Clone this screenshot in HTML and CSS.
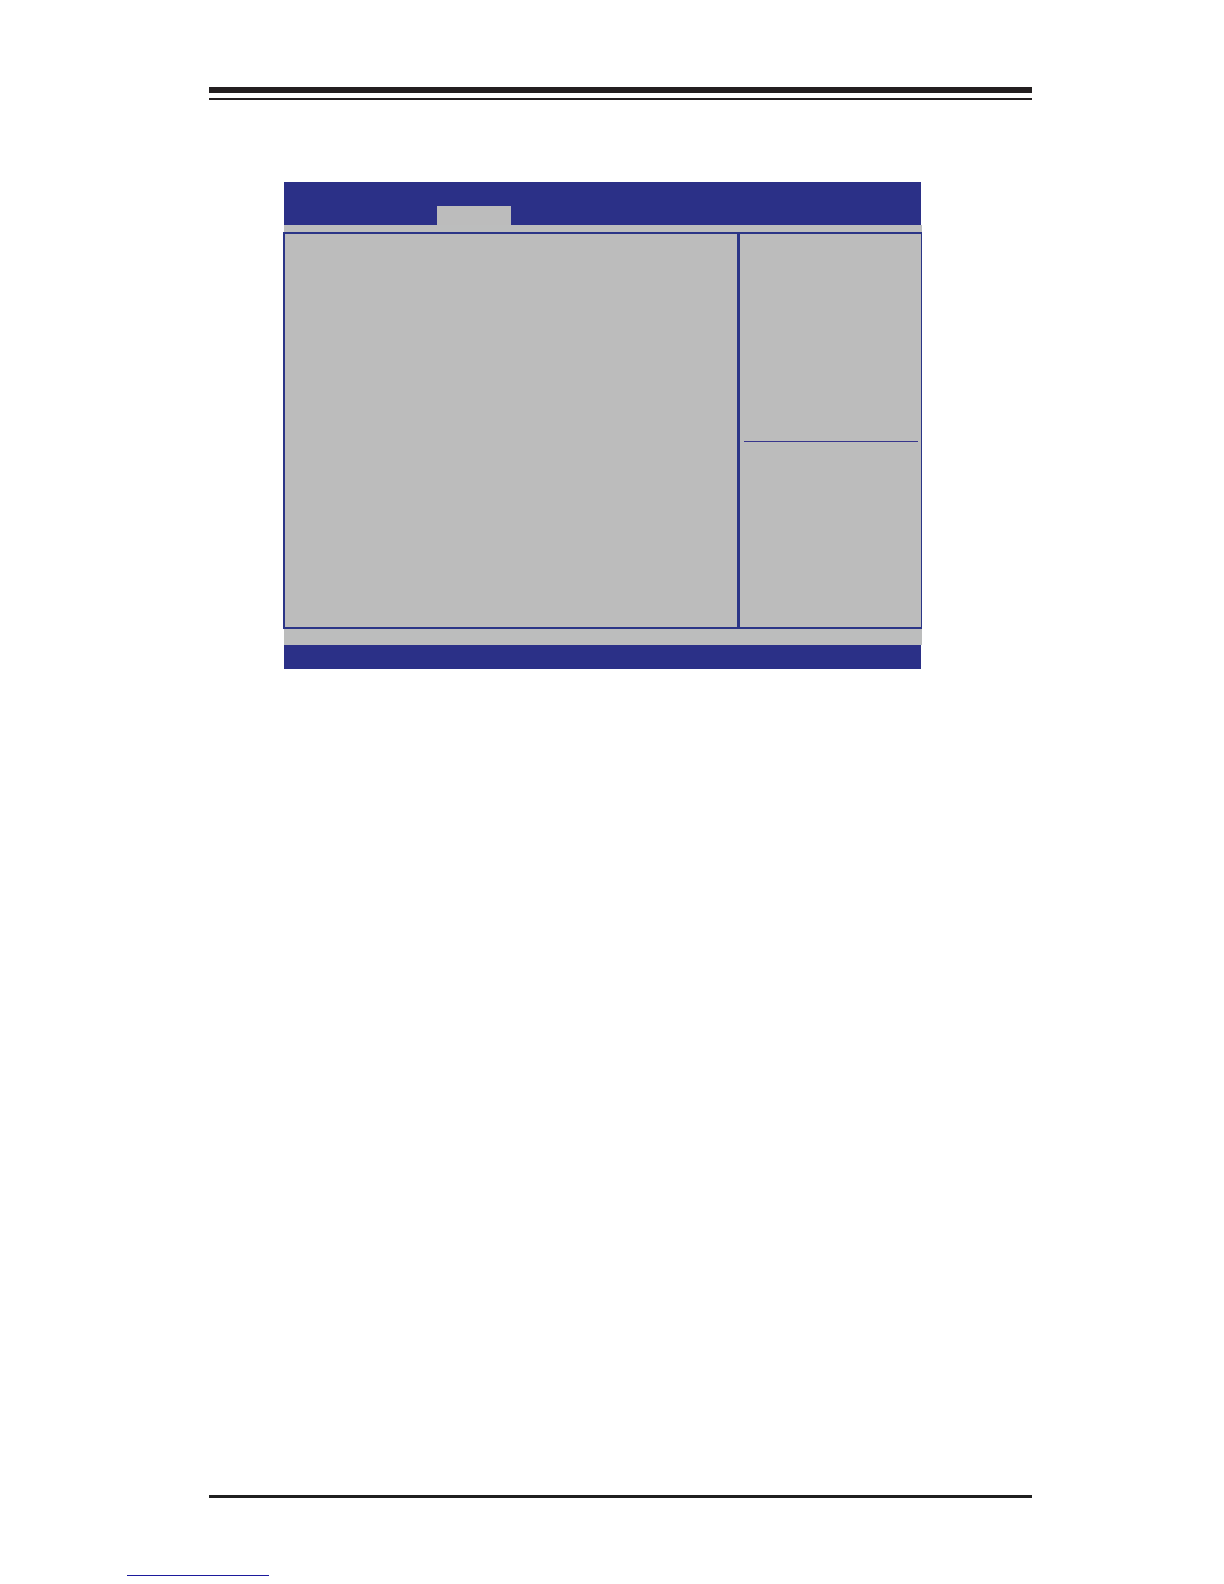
FILE: index.html
```html
<!DOCTYPE html>
<html lang="en">
<head>
    <meta charset="utf-8">
    <title>Setup Utility</title>
    <link rel="stylesheet" href="styles.css">
</head>
<body>
    <div class="page">
        <header class="page-header"></header>

        <main class="content">
            <div class="screen">
                <div class="menu-bar">
                    <div class="tab"></div>
                </div>
                <div class="strip"></div>

                <div class="panel">
                    <section class="options"></section>
                    <aside class="sidebar">
                        <div class="help"></div>
                        <div class="keys"></div>
                    </aside>
                </div>

                <div class="strip strip-bottom"></div>
                <div class="status-bar"></div>
            </div>
        </main>

        <footer class="page-footer"></footer>
    </div>

    <a class="page-link" href="#"></a>
</body>
</html>
```

FILE: styles.css
```css
* {
    box-sizing: border-box;
}

body {
    margin: 0;
    min-height: 100vh;
    display: flex;
    flex-direction: column;
    background-color: #ffffff;
    font-family: "Liberation Sans", Arial, sans-serif;
}

.page {
    flex: 1;
    display: flex;
    flex-direction: column;
    padding: 87px 192px 0 209px;
}

/* thick rule over a thin one */
.page-header {
    height: 13px;
    border-top: 6px solid #231f20;
    border-bottom: 2px solid #231f20;
}

.content {
    flex: 1;
    padding: 82px 110px 0 74px;
}

.menu-bar {
    display: flex;
    align-items: flex-end;
    height: 43px;
    margin: 0 1px;
    padding-left: 153px;
    background-color: #2b3087;
}

.tab {
    width: 74px;
    height: 19px;
    background-color: #bcbcbc;
}

.strip {
    height: 7px;
    margin-left: 1px;
    background-color: #bcbdbd;
}

.strip-bottom {
    height: 16px;
}

.panel {
    display: flex;
    min-height: 397px;
    border: 2px solid #2b3587;
    border-right-width: 1px;
    background-color: #bcbcbc;
}

.options {
    flex: 1;
}

.sidebar {
    width: 184px;
    padding: 0 3px 0 4px;
    border-left: 3px solid #2b3587;
}

.help {
    height: 208px;
    border-bottom: 1px solid #38368c;
}

.status-bar {
    height: 24px;
    margin: 0 1px;
    background-color: #2b3087;
}

.page-footer {
    height: 3px;
    background-color: #1f1f1f;
}

.page-link {
    width: 142px;
    height: 78px;
    margin: 0 0 8px 127px;
    border-bottom: 1px solid #1c1a9c;
}
```
